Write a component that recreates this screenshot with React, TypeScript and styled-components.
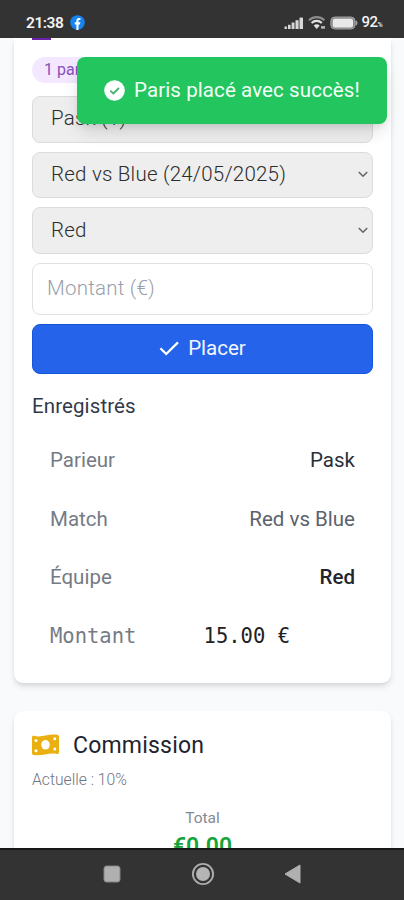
import React from "react";
import styled, { createGlobalStyle } from "styled-components";

const GlobalStyle = createGlobalStyle`
  * { box-sizing: border-box; }
  body { margin: 0; background: #f9fafb; font-family: Roboto, "Liberation Sans", sans-serif; }
`;

const Phone = styled.div`
  position: relative;
  display: flex;
  flex-direction: column;
  width: 404px;
  height: 900px;
  overflow: hidden;
  background: #f8fafc;
`;

const StatusBar = styled.header`
  display: flex;
  align-items: center;
  justify-content: space-between;
  flex: none;
  height: 38px;
  padding: 7px 22px 0 26px;
  background: #333;
  color: #f3f3f3;
`;

const StatusGroup = styled.div<{ $gap: number }>`
  display: flex;
  align-items: center;
  gap: ${(p) => p.$gap}px;
`;

const Clock = styled.span`
  font-size: 15.5px;
  font-weight: 600;
  line-height: 18px;
  letter-spacing: -0.45px;
`;

const Charge = styled.span`
  display: flex;
  align-items: baseline;
  padding-top: 1px;
  font-size: 15px;
  font-weight: 500;
  line-height: 18px;
  letter-spacing: -0.6px;
  small { font-size: 7px; }
`;

const Page = styled.main`
  display: flex;
  flex-direction: column;
  flex: 1;
  min-height: 0;
  padding: 0 13px 0 14px;
  gap: 28px;
  overflow: hidden;
`;

const Card = styled.section<{ $height: number; $continued?: boolean }>`
  display: flex;
  flex-direction: column;
  flex: none;
  height: ${(p) => p.$height}px;
  padding: 0 18px;
  background: #fff;
  border-radius: ${(p) => (p.$continued ? "0 0 9px 9px" : "9px")};
  box-shadow: 0 4px 7px -1px rgba(0, 0, 0, 0.12), 0 2px 4px -1px rgba(0, 0, 0, 0.07);
`;

const IconSliver = styled.div`
  width: 19px;
  height: 2px;
  margin-bottom: 17px;
  background: #6b21a8;
`;

const Pill = styled.span`
  align-self: flex-start;
  width: 84px;
  height: 26px;
  margin-bottom: 13px;
  padding-left: 12px;
  border-radius: 13px;
  background: #f3e8ff;
  color: #8a50bd;
  font-size: 16px;
  line-height: 26px;
`;

const Form = styled.div`
  display: flex;
  flex-direction: column;
  gap: 9px;
`;

const Select = styled.div`
  display: flex;
  align-items: center;
  justify-content: space-between;
  height: 46.7px;
  padding: 0 3px 2px 18px;
  border: 1px solid #d9dbde;
  border-radius: 8px;
  background: #eee;
  color: #2c2c2c;
  font-size: 20.5px;
  font-weight: 300;
  letter-spacing: 0.22px;
`;

const AmountField = styled.div`
  display: flex;
  align-items: center;
  height: 52px;
  padding: 0 14px 2px;
  border: 1px solid #dfe1e5;
  border-radius: 8px;
  color: #9a9fa8;
  font-size: 20.5px;
  font-weight: 300;
  letter-spacing: 0.22px;
`;

const SubmitButton = styled.button`
  display: flex;
  align-items: center;
  justify-content: center;
  gap: 8px;
  height: 50px;
  padding: 0 0 2px;
  border: 1px solid #1556d8;
  border-radius: 8px;
  background: #2563eb;
  color: #f3f7ff;
  font: 400 20.5px Roboto, sans-serif;
`;

const SectionTitle = styled.h2`
  margin: 19px 0 12px;
  color: #323a4a;
  font-size: 20.5px;
  font-weight: 400;
  line-height: 26px;
  letter-spacing: 0.1px;
`;

const BetRow = styled.div<{ $mono?: boolean }>`
  display: flex;
  justify-content: space-between;
  align-items: center;
  flex: none;
  height: 58.5px;
  padding: 0 ${(p) => (p.$mono ? 83 : 18)}px 0 18px;
  font-family: ${(p) => (p.$mono ? '"DejaVu Sans Mono", monospace' : "inherit")};
  font-size: 20.5px;
`;

const Label = styled.span`
  color: #757b85;
`;

const Value = styled.span<{ $tone: string; $weight: number }>`
  color: ${(p) => p.$tone};
  font-weight: ${(p) => p.$weight};
`;

const CardHeading = styled.h2`
  display: flex;
  align-items: center;
  gap: 14px;
  margin: 18px 0 0;
  height: 32px;
  color: #1d2430;
  font-size: 23px;
  font-weight: 400;
  letter-spacing: 0.2px;
`;

const Rate = styled.p`
  margin: 8px 0 0;
  color: #6f757f;
  font-size: 15.7px;
  font-weight: 300;
  line-height: 21px;
`;

const Total = styled.div`
  margin-top: 18px;
  text-align: center;
  color: #858a93;
  font-size: 15.5px;
  font-weight: 400;
  line-height: 21px;
`;

const TotalAmount = styled.div`
  margin-top: 1px;
  text-align: center;
  color: #16a33a;
  font-size: 23px;
  font-weight: 600;
  line-height: 34px;
`;

const Toast = styled.div`
  position: absolute;
  top: 57px;
  left: 77px;
  display: flex;
  align-items: center;
  gap: 9px;
  width: 310px;
  height: 67px;
  padding: 0 0 1px 27px;
  border-radius: 8px;
  background: #22c55e;
  color: #f4fff7;
  font-size: 20.5px;
  letter-spacing: 0.1px;
  white-space: nowrap;
  box-shadow: 0 10px 17px -3px rgba(0, 0, 0, 0.13), 0 4px 7px -2px rgba(0, 0, 0, 0.08);
`;

const NavBar = styled.nav`
  display: flex;
  align-items: center;
  justify-content: space-between;
  flex: none;
  height: 52px;
  padding: 0 102px 2px 103px;
  border-top: 2px solid #171717;
  background: #333;
`;

const Chevron = () => (
  <svg width="12" height="12" viewBox="0 0 12 12" fill="none" stroke="#666" strokeWidth="1.6">
    <path d="M1.8 4 L6 8.2 L10.2 4" />
  </svg>
);

const FacebookMark = () => (
  <svg width="15" height="15" viewBox="0 0 15 15">
    <circle cx="7.5" cy="7.5" r="7.3" fill="#1683ee" />
    <path d="M6.4 15V9.5H4.7V7.2h1.7V5.7c0-1.8 1-2.7 2.6-2.7l1.4.1v1.9h-.9c-.7 0-1 .4-1 1v1.2h1.8l-.3 2.3H8.5V15z" fill="#fff" />
  </svg>
);

const Signal = () => (
  <svg width="20" height="14" viewBox="0 0 20 14" fill="#d8d8d8">
    <rect x="0.5" y="10.5" width="2.4" height="2.5" />
    <rect x="4" y="8.8" width="2.6" height="4.2" />
    <rect x="7.6" y="6.5" width="2.9" height="6.5" />
    <rect x="11.5" y="4.2" width="3.1" height="8.8" />
    <rect x="15.5" y="1.6" width="3.5" height="11.4" />
  </svg>
);

const Wifi = () => (
  <svg width="18" height="15" viewBox="0 0 18 15" fill="none">
    <path d="M1 5.2a11 11 0 0 1 15.4 0" stroke="#8c8c8c" strokeWidth="2.2" />
    <path d="M3.6 8a7.1 7.1 0 0 1 10.2 0" stroke="#e2e2e2" strokeWidth="2.1" />
    <path d="M5.7 10.6a4.3 4.3 0 0 1 6 0l-3 3.4z" fill="#e2e2e2" />
    <path d="M13 12.4h4" stroke="#b5b5b5" strokeWidth="2.6" />
  </svg>
);

const Battery = () => (
  <svg width="28" height="14" viewBox="0 0 28 14">
    <rect x="0.8" y="1" width="24.2" height="12" rx="4" fill="#888" stroke="#a0a0a0" />
    <rect x="2.8" y="2.7" width="20.2" height="8.7" rx="2" fill="#e9e9e9" />
    <path d="M25.5 4.2c2.6.8 2.6 4.8 0 5.6z" fill="#a5a5a5" />
  </svg>
);

const CheckMark = () => (
  <svg width="21" height="21" viewBox="0 0 21 21" fill="none" stroke="#fff" strokeWidth="2.3">
    <path d="M1.4 10.3 L7.2 16 L19 4.4" />
  </svg>
);

const CheckBadge = () => (
  <svg width="21" height="21" viewBox="0 0 21 21">
    <circle cx="10.5" cy="10.5" r="10.3" fill="#fff" />
    <path d="M6.3 10.7 L9.3 13.4 L15 7.9" fill="none" stroke="#3fb56b" strokeWidth="1.8" />
  </svg>
);

const BanknoteIcon = () => (
  <svg width="27" height="22" viewBox="0 0 27 22">
    <path
      d="M0 3.2C0 2 .8 1.4 2 1.8C10 4 16 -.8 25.3 .8C26.4 1 27 1.7 27 2.7V18.1C27 19.5 26.3 20.2 25 19.9C16 18 11 22.6 1.6 21C.5 20.8 0 20.2 0 19.2Z"
      fill="#eab010"
    />
    <g fill="#fff">
      <ellipse cx="13.5" cy="10.8" rx="4.3" ry="4.8" />
      <circle cx="4" cy="6.5" r="1.5" />
      <circle cx="4" cy="16.7" r="1.5" />
      <circle cx="22.8" cy="4.8" r="1.5" />
      <circle cx="22.8" cy="15" r="1.5" />
    </g>
  </svg>
);

const RecentsIcon = () => (
  <svg width="18" height="18" viewBox="0 0 18 18">
    <rect x="1" y="1" width="16" height="16" rx="2.5" fill="#b0b0b0" stroke="#858585" />
  </svg>
);

const HomeIcon = () => (
  <svg width="24" height="24" viewBox="0 0 24 24">
    <circle cx="12" cy="12" r="10.1" fill="none" stroke="#adadad" strokeWidth="1.9" />
    <circle cx="12" cy="12" r="7" fill="#b5b5b5" />
  </svg>
);

const BackIcon = () => (
  <svg width="18" height="20" viewBox="0 0 18 20">
    <path d="M1 10 L16 1 V19 Z" fill="#b0b0b0" stroke="#b0b0b0" strokeLinejoin="round" />
  </svg>
);

const bets = [
  { label: "Parieur", value: "Pask", tone: "#2a303a", weight: 400 },
  { label: "Match", value: "Red vs Blue", tone: "#5c626c", weight: 400 },
  { label: "Équipe", value: "Red", tone: "#22252b", weight: 500 },
  { label: "Montant", value: "15.00 €", tone: "#222", weight: 400, mono: true },
];

export default function App() {
  return (
    <Phone>
      <GlobalStyle />
      <StatusBar>
        <StatusGroup $gap={7}>
          <Clock>21:38</Clock>
          <FacebookMark />
        </StatusGroup>
        <StatusGroup $gap={4}>
          <Signal />
          <Wifi />
          <Battery />
          <Charge>92<small>%</small></Charge>
        </StatusGroup>
      </StatusBar>
      <Page>
        <Card $height={645} $continued>
          <IconSliver />
          <Pill>1 paris</Pill>
          <Form>
            <Select>Pask (1)<Chevron /></Select>
            <Select>Red vs Blue (24/05/2025)<Chevron /></Select>
            <Select>Red<Chevron /></Select>
            <AmountField>Montant (€)</AmountField>
            <SubmitButton><CheckMark />Placer</SubmitButton>
          </Form>
          <SectionTitle>Enregistrés</SectionTitle>
          {bets.map((bet) => (
            <BetRow key={bet.label} $mono={bet.mono}>
              <Label>{bet.label}</Label>
              <Value $tone={bet.tone} $weight={bet.weight}>{bet.value}</Value>
            </BetRow>
          ))}
        </Card>
        <Card $height={300}>
          <CardHeading>
            <BanknoteIcon />
            Commission
          </CardHeading>
          <Rate>Actuelle : 10%</Rate>
          <Total>Total</Total>
          <TotalAmount>€0.00</TotalAmount>
        </Card>
      </Page>
      <NavBar>
        <RecentsIcon />
        <HomeIcon />
        <BackIcon />
      </NavBar>
      <Toast>
        <CheckBadge />
        Paris placé avec succès!
      </Toast>
    </Phone>
  );
}
